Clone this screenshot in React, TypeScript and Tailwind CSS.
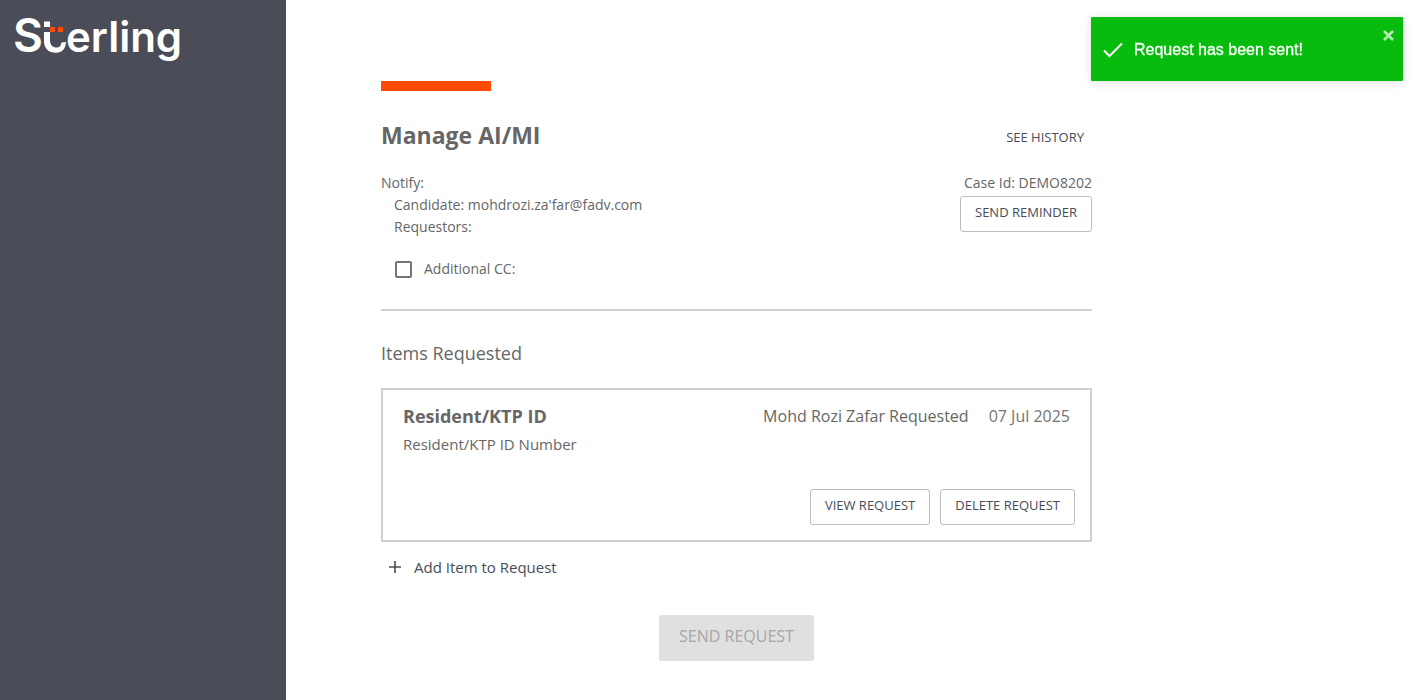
import React, { useState } from "react";

function SterlingLogo() {
  return (
    <svg
      width="180"
      height="60"
      viewBox="-4 -4 180 60"
      role="img"
      aria-label="Sterling"
      className="block overflow-visible fill-white"
      fontFamily="Inter, sans-serif"
      fontWeight="600"
    >
      <text x="-1" y="38" fontSize="46">S</text>
      <rect x="30" y="7.500" width="6" height="5.500" />
      <path d="M30 18H36V26C36 31 38.500 33.500 43 33.500C45.500 33.500 47 31.500 47.500 28.500L52 28C51.500 35 48 38.800 42 38.800C34 38.800 30 34 30 27Z" />
      <rect x="36" y="13" width="5" height="5" fill="#ff4b0a" />
      <rect x="44" y="13" width="5" height="5" fill="#ff4b0a" />
      <text x="52" y="38" fontSize="42">erling</text>
    </svg>
  );
}

function OutlineButton({ children }: { children: React.ReactNode }) {
  return (
    <button
      type="button"
      className="h-9 rounded-[3px] border border-[#bdbdbd] bg-white px-3.5 pb-1 text-[13px] leading-5 text-[#484c58]"
    >
      {children}
    </button>
  );
}

function Toast({ onClose }: { onClose: () => void }) {
  return (
    <div
      role="status"
      className="fixed top-[17px] right-3.5 flex h-16 w-[312px] items-center rounded-[1px] bg-[#07bc0c] pt-0.5 pl-3 font-['Liberation_Sans',sans-serif] text-base text-white shadow-[0_1px_10px_0_rgba(0,0,0,0.1),0_2px_15px_0_rgba(0,0,0,0.05)]"
    >
      <svg width="20" height="16" viewBox="0 0 20 16" className="mr-[11px]" fill="none" stroke="white" strokeWidth="2" aria-hidden="true">
        <path d="M1 8.500L6.500 14L19 1.500" />
      </svg>
      <span className="[-webkit-text-stroke:0.3px_white]">Request has been sent!</span>
      <button type="button" aria-label="Close" onClick={onClose} className="absolute top-3 right-2 opacity-70">
        <svg width="13" height="13" viewBox="0 0 13 13" stroke="white" strokeWidth="2.6" aria-hidden="true">
          <path d="M2 2L11 11M11 2L2 11" />
        </svg>
      </button>
    </div>
  );
}

export default function App() {
  const [toastOpen, setToastOpen] = useState(true);

  return (
    <div className="flex min-h-screen bg-white font-['Open_Sans',sans-serif] text-sm text-[#666]">
      <aside className="w-[286px] shrink-0 bg-[#4a4d58] p-2.5">
        <SterlingLogo />
      </aside>

      <main className="min-w-0 flex-1 px-[95px] pt-[81px] pb-9">
        <div className="max-w-[711px]">
          <div className="h-2.5 w-[110px] bg-[#ff4b00]" />

          <header className="mt-7 flex items-center justify-between">
            <h1 className="text-[23px] leading-8 font-bold">Manage AI/MI</h1>
            <button type="button" className="px-2 pt-1 text-[13px] leading-5 text-[#484c58]">
              SEE HISTORY
            </button>
          </header>

          <section className="mt-[21px] flex justify-between border-b-2 border-[#d0d0d5] pb-[29px]">
            <div className="leading-[22px]">
              <p>Notify:</p>
              <p className="pl-[13px]">Candidate: mohdrozi.za'far@fadv.com</p>
              <p className="pl-[13px]">Requestors:</p>
              <label className="mt-5 flex items-center gap-3 pl-3.5">
                <input
                  type="checkbox"
                  className="size-[17px] appearance-none rounded-[2px] border-2 border-[#757575] checked:bg-[#757575]"
                />
                Additional CC:
              </label>
            </div>
            <div className="flex flex-col items-end gap-0.5 leading-[22px]">
              <p>Case Id: DEMO8202</p>
              <OutlineButton>SEND REMINDER</OutlineButton>
            </div>
          </section>

          <h2 className="mt-7 text-lg leading-7">Items Requested</h2>

          <article className="mt-[21px] border-2 border-[#d0d0d5] px-[15px] pt-3 pb-[15px]">
            <div className="flex items-start justify-between px-[5px]">
              <div>
                <h3 className="text-lg leading-7 font-bold">Resident/KTP ID</h3>
                <p className="text-[15px] leading-7">Resident/KTP ID Number</p>
              </div>
              <div className="flex gap-5 text-base leading-7">
                <span>Mohd Rozi Zafar Requested</span>
                <time dateTime="2025-07-07" className="text-[#757575]">07 Jul 2025</time>
              </div>
            </div>
            <div className="mt-[31px] flex justify-end gap-2.5">
              <OutlineButton>VIEW REQUEST</OutlineButton>
              <OutlineButton>DELETE REQUEST</OutlineButton>
            </div>
          </article>

          <button type="button" className="mt-[11px] flex items-center gap-[13px] pl-2 text-[15px] leading-7 text-[#484c58]">
            <svg width="12" height="12" viewBox="0 0 12 12" stroke="currentColor" strokeWidth="1.6" aria-hidden="true">
              <path d="M6 0V12M0 6H12" />
            </svg>
            Add Item to Request
          </button>

          <div className="mt-[34px] flex justify-center">
            <button type="button" disabled className="h-[46px] rounded-[3px] bg-[#e0e0e0] px-5 pb-1 text-base leading-6 text-[#a6a6a6]">
              SEND REQUEST
            </button>
          </div>
        </div>
      </main>

      {toastOpen && <Toast onClose={() => setToastOpen(false)} />}
    </div>
  );
}
